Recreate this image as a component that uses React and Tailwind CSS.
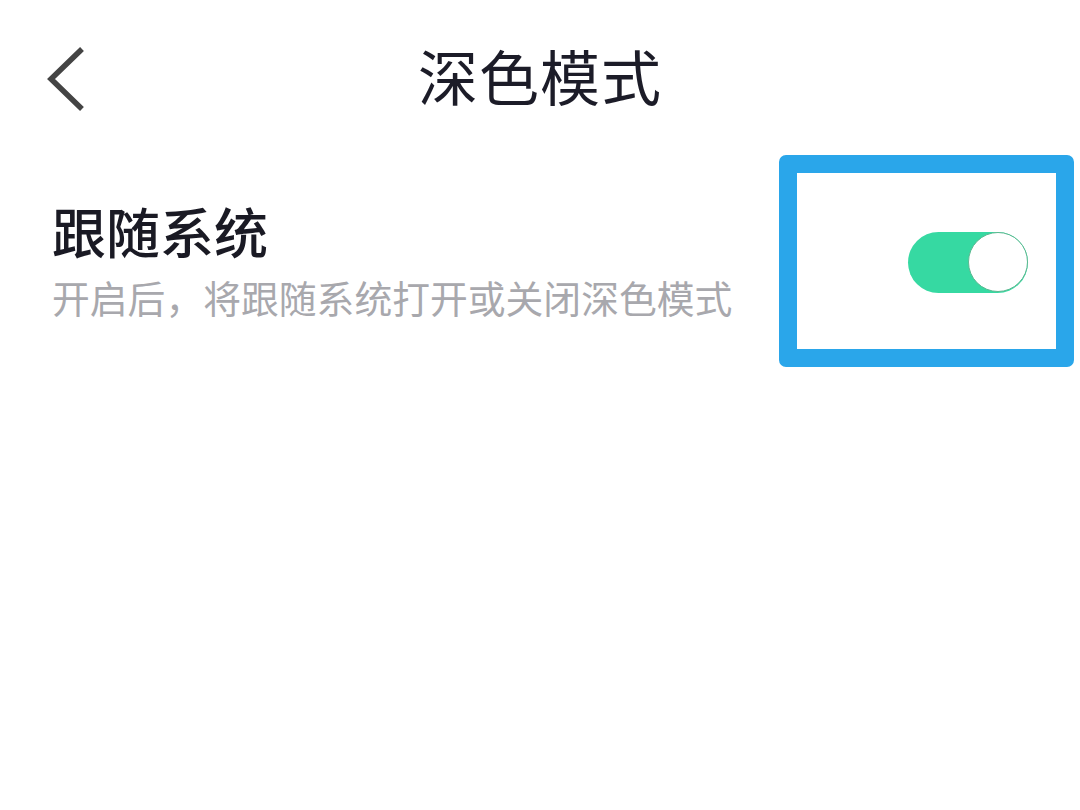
export default function App() {
  const font = { fontFamily: '"Noto Sans CJK SC", "Noto Sans", sans-serif' };
  return (
    <div className="w-[1080px] h-[810px] bg-white relative overflow-hidden" style={font}>
      <div className="h-[160px] flex items-start">
        <div className="w-full h-[150px] flex items-center justify-center relative">
          <svg className="absolute left-[46px] top-[47px]" width="40" height="64" viewBox="0 0 40 64">
            <polyline points="34,4 5,32 34,60" fill="none" stroke="#444444" strokeWidth="5.5" strokeLinecap="square" strokeLinejoin="miter" />
          </svg>
          <div className="text-[60px] leading-none text-[#1c1c28] tracking-[1px]">深色模式</div>
        </div>
      </div>
      <div className="flex items-start">
        <div className="pl-[52px] pt-[44px] flex flex-col">
          <div className="text-[54px] leading-none font-medium text-[#1a1a24]">跟随系统</div>
          <div className="mt-[20px] text-[37.8px] leading-none text-[#a8a8ad]">开启后，将跟随系统打开或关闭深色模式</div>
        </div>
        <div className="ml-auto mr-[6px] mt-[-5px] w-[295px] h-[212px] border-[18px] border-[#2aa6ea] rounded-[7px] flex items-center justify-end pr-[28px]">
          <div className="w-[120px] h-[61px] rounded-full bg-[#36d9a2] flex items-center justify-end mt-[2px]">
            <div className="w-[60px] h-[60px] rounded-full bg-white border border-[#5cb890]"></div>
          </div>
        </div>
      </div>
    </div>
  );
}
